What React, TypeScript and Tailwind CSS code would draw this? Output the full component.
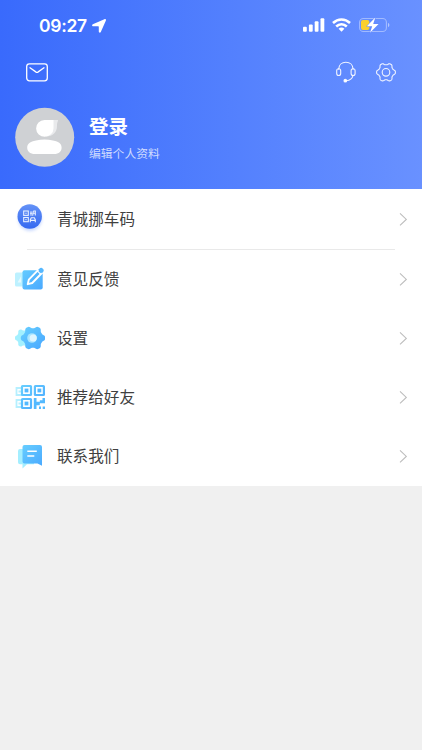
import type { ReactNode } from "react";

type MenuItem = { id: string; label: string; icon: ReactNode };

// Six flat teeth with smooth valleys, sampled around the centre
function cogPath(cx: number, cy: number, r: number, depth: number): string {
  const points: string[] = [];
  for (let deg = 0; deg < 360; deg += 3) {
    const t = (deg * Math.PI) / 180;
    const k = (1 - Math.cos(6 * t)) / 2;
    const radius = r - depth * k * k * (3 - 2 * k);
    points.push(`${(cx + radius * Math.cos(t)).toFixed(2)} ${(cy + radius * Math.sin(t)).toFixed(2)}`);
  }
  return `M${points.join("L")}Z`;
}

function StatusBar() {
  return (
    <div className="flex h-[50px] items-center justify-between pr-[31px] pl-[39px]">
      <div className="flex items-center gap-[5px] pt-[2px]">
        <span className="font-['Inter'] text-[17.5px] leading-none font-semibold tracking-[-0.3px]">09:27</span>
        <svg className="h-[14px] w-[14px]" viewBox="0 0 14 14" fill="currentColor">
          <path d="M12.4.2.8 5.200C-.3 5.700 0 7.200 1.200 7.200H6.200c.4 0 .6.200.6.600V12.600c0 1.300 1.500 1.600 2 .4L13.900 1.600C14.300.6 13.400-.2 12.400.2Z" />
        </svg>
      </div>
      <div className="flex items-center">
        <svg className="h-[14px] w-[22px]" viewBox="0 0 22 14" fill="currentColor">
          <rect x="0" y="8.7" width="3.8" height="5" rx="1" />
          <rect x="5.9" y="6.4" width="3.8" height="7.3" rx="1" />
          <rect x="11.7" y="3.3" width="3.8" height="10.4" rx="1" />
          <rect x="17.5" y="0.3" width="3.8" height="13.4" rx="1" />
        </svg>
        <svg className="ml-[7px] h-[14px] w-[19px]" viewBox="0 0 19 14" fill="none" stroke="currentColor" strokeWidth="2.6">
          <path d="M1 5C6 .4 13 .4 18 5" />
          <path d="M4.200 8.500C7.300 5.600 11.700 5.600 14.800 8.500" />
          <path d="M6.600 10.700C8.300 9.200 10.700 9.200 12.400 10.700L9.500 13.700Z" fill="currentColor" stroke="none" />
        </svg>
        <svg className="ml-[8px] h-[16px] w-[32px]" viewBox="0 0 32 16" fill="none">
          <rect x="0.6" y="1.5" width="26.8" height="13" rx="3.8" stroke="#fff" strokeOpacity="0.4" strokeWidth="1.1" />
          <path d="M29 5.800V10.200C30.900 9.300 30.900 6.700 29 5.800Z" fill="#fff" fillOpacity="0.5" />
          <rect x="2" y="3" width="8.4" height="10" rx="2" fill="#fbd02e" />
          <path d="M16.300.4 7.800 9.200h5.400l-2.200 6.500L19.600 6.900h-5.400Z" fill="#fff" stroke="#6288fd" strokeWidth="1" paintOrder="stroke" />
        </svg>
      </div>
    </div>
  );
}

function Toolbar() {
  return (
    <div className="flex h-[44px] items-center px-[26px]">
      <button type="button" aria-label="消息">
        <svg className="h-[20px] w-[22px]" viewBox="0 0 22 20" fill="none" stroke="#fff" strokeWidth="1.3" strokeLinecap="round" strokeLinejoin="round">
          <rect x="0.7" y="1.8" width="20.6" height="17" rx="2.7" />
          <path d="M4 5.800 9.800 9.900C10.600 10.500 11.400 10.500 12.200 9.900L18 5.800" />
        </svg>
      </button>
      <button type="button" aria-label="客服" className="ml-auto">
        <svg className="h-[22px] w-[20px]" viewBox="0 0 20 22" fill="none" stroke="#fff" strokeOpacity="0.9" strokeWidth="1.1" strokeLinecap="round">
          <path d="M2.700 8.200C2.800 4 5.800 1.200 9.900 1.200s7.100 2.800 7.200 7" />
          <rect x="0.7" y="7.8" width="4" height="6.7" rx="2" />
          <rect x="15.1" y="7.8" width="4" height="6.7" rx="2" />
          <path d="M17 14.600C16.200 17.600 13.800 19.400 10.500 19.700" />
          <circle cx="9.3" cy="19.7" r="1.3" fill="#fff" />
        </svg>
      </button>
      <button type="button" aria-label="设置" className="ml-[20px]">
        <svg className="h-[20px] w-[20px]" viewBox="0 0 20 20" fill="none" stroke="#fff" strokeOpacity="0.9" strokeWidth="1.1" strokeLinejoin="round">
          <path d={cogPath(10, 10.3, 9.4, 1.9)} />
          <circle cx="10" cy="10.3" r="3.8" />
        </svg>
      </button>
    </div>
  );
}

function Profile() {
  return (
    <div className="flex pt-[13px] pl-[15px]">
      <svg className="h-[60px] w-[60px]" viewBox="0 0 60 60">
        <circle cx="29.7" cy="30.3" r="29.5" fill="#cfd1d4" />
        <path d="M31 13H43C43 15 42 15 42 19C42 25 38 29.500 31 29.500Z" fill="#e9eaec" />
        <path d="M29.500 13H38.500V21.500A8.700 8.400 0 1 1 29.500 13Z" fill="#fff" />
        <path d="M21 33.500Q29.500 31.700 38 33.500C44 34.300 46.600 37 46.600 40.500C46.600 44.500 44 47 39 47H20C15 47 12.200 44.500 12.200 40.500C12.200 37 15 34.300 21 33.500Z" fill="#fff" />
      </svg>
      <div className="pt-[5px] pl-[14px]">
        <div className="text-[19.5px] leading-[28px] font-bold">登录</div>
        <div className="mt-[5px] text-[11.8px] leading-[16px] text-white/75">编辑个人资料</div>
      </div>
    </div>
  );
}

function MoveCarIcon() {
  return (
    <svg className="h-[30px] w-[30px] overflow-visible" viewBox="0 0 30 30" fill="none">
      <defs>
        <linearGradient id="car" x1="0" y1="0" x2="0" y2="1">
          <stop stopColor="#6492f7" />
          <stop offset="1" stopColor="#3468f0" />
        </linearGradient>
        <filter id="glow" x="-50%" y="-50%" width="200%" height="200%">
          <feGaussianBlur stdDeviation="1.5" />
        </filter>
      </defs>
      <circle cx="15" cy="15.2" r="11.8" fill="#6d97fb" opacity="0.35" filter="url(#glow)" />
      <circle cx="14.7" cy="12.5" r="12.2" fill="url(#car)" />
      <g stroke="#e8f0ff" strokeWidth="1.1">
        <rect x="8.7" y="7" width="4.6" height="4.4" />
        <rect x="8.7" y="13.5" width="4.6" height="4.2" />
        <path d="M10.400 9.200h1.200M10.400 15.600h1.200M15 9.200h2.200M16 7.200v4.500M18.300 7h2v4.500M17.600 9.200h3.200M18.300 7l-.6 4.700" />
        <path d="M15.300 18.200v-2.500l1-2h3l1 2v2.500M15.300 16.400h5" />
      </g>
    </svg>
  );
}

function FeedbackIcon() {
  return (
    <svg className="h-[26px] w-[30px]" viewBox="0 0 30 26" fill="none">
      <rect x="0" y="6.5" width="18" height="14" rx="1.5" fill="#bdf1ff" />
      <path d="M2.500 16.500 6 10.500v6Z" fill="#fff" fillOpacity="0.6" />
      <rect x="7.5" y="4.2" width="20.2" height="19.2" rx="2" fill="url(#blue)" />
      <path d="m13.800 13.700 10.200-10.500c1.200-1.200 2.400-1 3.400 0s1.100 2.100 0 3.300L17.200 17l-4.500 1.200Z" fill="#52b6ff" stroke="#fff" strokeWidth="1.9" strokeLinejoin="round" />
      <path d="m24.300 2.700c1.300-1.300 2.500-1.100 3.600 0s1.200 2.300 0 3.500l-1.100 1.100-3.600-3.500Z" fill="#56b8ff" />
      <path d="m22.300 4.800 3.500 3.500" stroke="#fff" strokeWidth="1.2" />
    </svg>
  );
}

function SettingsIcon() {
  return (
    <svg className="h-[26px] w-[30px]" viewBox="0 0 30 26">
      <path d={cogPath(9.2, 13, 9.4, 2)} fill="#a3f0ff" />
      <path d={cogPath(18, 13, 12.2, 2.4)} fill="url(#blue)" />
      <circle cx="17" cy="13" r="4.8" fill="#a9e4ff" />
      <circle cx="18.2" cy="13" r="3.6" fill="#dff5ff" />
    </svg>
  );
}

function QrIcon() {
  return (
    <svg className="h-[26px] w-[30px]" viewBox="0 0 30 26" fill="none">
      <g stroke="#b5efff" strokeWidth="1.8">
        <path d="M8 4H1.500V11H8M8 16H1.500V23H8M3.500 7.500H6M3.500 19.500H6" />
      </g>
      <g stroke="url(#blue)" strokeWidth="2.2">
        <rect x="7" y="2" width="9" height="9" rx="0.5" />
        <rect x="19.9" y="2" width="9" height="9" rx="0.5" />
        <rect x="7" y="15" width="9" height="9" rx="0.5" />
      </g>
      <g fill="#53b9ff">
        <rect x="9.6" y="4.6" width="3.8" height="3.8" />
        <rect x="22.5" y="4.6" width="3.8" height="3.8" />
        <rect x="9.6" y="17.6" width="3.8" height="3.8" />
        <path d="M18.800 14h2.700v3.700h3.300v-1.500h2.700V14H30v5.200h-5.200v2h-3.300V25h-2.700ZM24 22.500h2V25h-2ZM27.700 22.500H30V25h-2.300Z" />
      </g>
    </svg>
  );
}

function ContactIcon() {
  return (
    <svg className="h-[26px] w-[30px]" viewBox="0 0 30 26" fill="none">
      <path d="M5 6H19V21.200H12L7.500 25.400V21.200H5A2 2 0 0 1 3 19.200V8A2 2 0 0 1 5 6Z" fill="#a4eeff" />
      <path d="M9.500 2H25A2 2 0 0 1 27 4V22.800L22.500 20.500H9.500A2 2 0 0 1 7.500 18.500V4A2 2 0 0 1 9.500 2Z" fill="url(#blue)" />
      <path d="M12.300 8.200h9.500M12.300 13h7" stroke="#fff" strokeWidth="1.5" />
    </svg>
  );
}

const items: MenuItem[] = [
  { id: "feedback", label: "意见反馈", icon: <FeedbackIcon /> },
  { id: "settings", label: "设置", icon: <SettingsIcon /> },
  { id: "share", label: "推荐给好友", icon: <QrIcon /> },
  { id: "contact", label: "联系我们", icon: <ContactIcon /> },
];

function MenuRow({ label, icon }: { label: string; icon: ReactNode }) {
  return (
    <div className="flex h-[59px] items-center pr-[14px] pb-px pl-[15px]">
      {icon}
      <span className="ml-[12px] pb-[2px] text-[15.6px] leading-6 text-[#404040]">{label}</span>
      <svg className="ml-auto h-[14px] w-[9px]" viewBox="0 0 9 14" fill="none" stroke="#bdbdbd" strokeWidth="1.1">
        <path d="M1 1.400 7.300 7.400 1 13.400" />
      </svg>
    </div>
  );
}

export default function App() {
  return (
    <div className="min-h-screen bg-[#f0f0f0] font-['Noto_Sans_CJK_SC',sans-serif]">
      <svg className="absolute h-0 w-0">
        <defs>
          <linearGradient id="blue" gradientUnits="userSpaceOnUse" x1="8" y1="2" x2="28" y2="24">
            <stop stopColor="#66cdff" />
            <stop offset="1" stopColor="#49a8ff" />
          </linearGradient>
        </defs>
      </svg>
      <header className="h-[189px] bg-linear-to-r from-[#396afc] to-[#6991ff] text-white">
        <StatusBar />
        <Toolbar />
        <Profile />
      </header>
      <main className="bg-white pt-px">
        <MenuRow label="青城挪车码" icon={<MoveCarIcon />} />
        <div className="mx-[27px] h-px bg-[#e9e9e9]" />
        {items.map((item) => (
          <MenuRow key={item.id} label={item.label} icon={item.icon} />
        ))}
      </main>
    </div>
  );
}
